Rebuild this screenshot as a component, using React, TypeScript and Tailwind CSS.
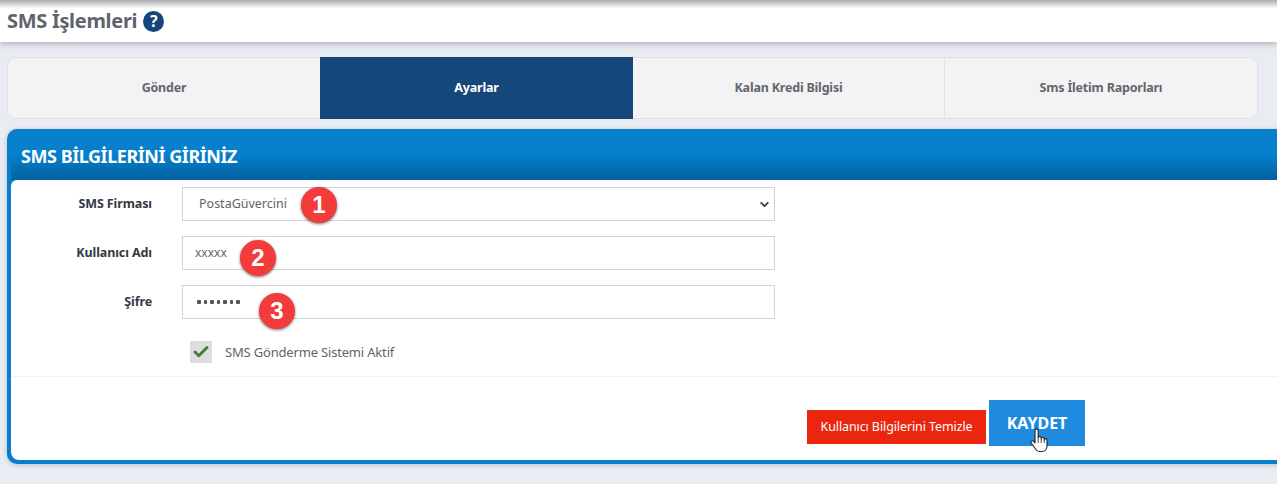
import { ChevronDown, Check } from 'lucide-react';

const tabs = [
  { label: 'Gönder', style: 'w-[313px] rounded-l-[8px] border-y border-l border-[#dfe1e4]', active: false },
  { label: 'Ayarlar', style: 'w-[313px] bg-[#16477a]', active: true },
  { label: 'Kalan Kredi Bilgisi', style: 'w-[312px] border-y border-r border-[#dfe1e4]', active: false },
  { label: 'Sms İletim Raporları', style: 'w-[313px] rounded-r-[8px] border-y border-r border-[#dfe1e4]', active: false },
];

function Badge({ n, className }: { n: number; className: string }) {
  return (
    <span
      className={`absolute flex h-9 w-9 items-center justify-center rounded-full bg-[#f33b3b] text-[24px] font-bold leading-none text-white shadow-[0_1px_3px_rgba(0,0,0,0.55)] font-['Liberation_Sans',sans-serif] ${className}`}
    >
      {n}
    </span>
  );
}

function Label({ children }: { children: string }) {
  return <label className="block w-[141px] text-right text-[12.5px] font-bold tracking-[-0.1px] text-[#333a42]">{children}</label>;
}

// hand cursor sitting on the save button
function HandCursor() {
  return (
    <svg viewBox="0 0 18 25" className="absolute left-[1019px] top-[248px] h-[25px] w-[18px]" fill="#fff" stroke="#222" strokeWidth="1.1" strokeLinejoin="round">
      <path d="M5 2.5a1.6 1.6 0 0 1 3.2 0V10a1.5 1.5 0 0 1 3 0v1a1.5 1.5 0 0 1 3 0v1a1.4 1.4 0 0 1 2.8 0v6c0 3-2 5.5-5 5.5H9.5c-2 0-3-1-4-2.5L1.2 15c-1-1.5.8-3 2.2-1.8L5 15Z" />
      <path d="M8.2 10v5M11.2 11v4M14.2 12v3" fill="none" strokeWidth="0.8" />
    </svg>
  );
}

export default function App() {
  return (
    <div className="h-[484px] w-[1277px] overflow-hidden bg-[#e9edf3] font-['Noto_Sans',sans-serif]">
      {/* page title */}
      <header className="flex h-[42px] items-center gap-[6px] bg-gradient-to-b from-[#a9abad] from-0% via-white via-[20%] to-white pl-[7px] shadow-[0_2px_6px_rgba(0,0,0,0.25)]">
        <h1 className="text-[20px] font-bold tracking-[-0.3px] text-[#5f636b]">SMS İşlemleri</h1>
        <span className="flex h-[21px] w-[21px] items-center justify-center rounded-full bg-[#16457a] text-[16px] font-bold leading-none text-white">?</span>
      </header>

      {/* tabs */}
      <nav className="ml-[7px] mt-[15px] flex h-[62px] w-[1251px]">
        {tabs.map((t) => (
          <div
            key={t.label}
            className={`flex items-center justify-center pt-[1px] text-[12.5px] font-bold tracking-[-0.2px] ${t.style} ${
              t.active ? 'text-white' : 'bg-[#f3f3f4] text-[#63676e]'
            }`}
          >
            {t.label}
          </div>
        ))}
      </nav>

      {/* form card */}
      <section className="-mr-[20px] ml-[7px] mt-[10px] h-[335px] rounded-[10px] border-b-4 border-l-4 border-[#0680cd] bg-[#0680cd] shadow-[0_1px_5px_rgba(0,0,0,0.2)]">
        <h2 className="flex h-[51px] items-center rounded-tl-[8px] bg-gradient-to-b from-[#0680cd] from-[50%] to-[#03629f] pl-[10px] pt-[4px] text-[18px] font-bold tracking-[-0.45px] text-white">
          SMS BİLGİLERİNİ GİRİNİZ
        </h2>
        <div className="relative h-[280px] rounded-bl-[8px] rounded-tl-[6px] bg-white">
          <div className="flex flex-col gap-[15px] pt-[7px]">
            <div className="flex items-center gap-[30px]">
              <Label>SMS Firması</Label>
              <div className="flex h-[34px] w-[593px] items-center justify-between border border-[#d0d4dc] pl-[16px] pr-[2px] text-[12.5px] text-[#61646b]">
                PostaGüvercini
                <ChevronDown size={13} strokeWidth={3.5} className="mr-[1px] text-[#444]" />
              </div>
            </div>
            <div className="flex items-center gap-[30px]">
              <Label>Kullanıcı Adı</Label>
              <div className="flex h-[34px] w-[593px] items-center border border-[#d0d4dc] pl-[12px] text-[12px] text-[#61646b]">xxxxx</div>
            </div>
            <div className="flex items-center gap-[30px]">
              <Label>Şifre</Label>
              <div className="flex h-[34px] w-[593px] items-center gap-[3px] border border-[#d0d4dc] pl-[14px]">
                {[0, 1, 2, 3, 4, 5, 6].map((i) => (
                  <span key={i} className="h-[3.5px] w-[3.5px] rounded-[1px] bg-[#50555b]" />
                ))}
              </div>
            </div>
          </div>

          <div className="ml-[179px] mt-[22px] flex items-center gap-[13px]">
            <span className="flex h-[22px] w-[22px] items-center justify-center bg-[#dedede]">
              <Check size={18} strokeWidth={4} className="text-[#4a7a3c]" />
            </span>
            <span className="pt-[1px] text-[13px] tracking-[-0.18px] text-[#61646b]">SMS Gönderme Sistemi Aktif</span>
          </div>

          <div className="mt-[13px] border-t border-[#f1f2f4]" />

          <div className="ml-[796px] mt-[23px] flex items-end gap-[3px]">
            <button className="mb-[2px] h-[34px] w-[179px] bg-[#ea260f] text-[12.5px] tracking-[-0.1px] text-white">Kullanıcı Bilgilerini Temizle</button>
            <button className="h-[46px] w-[96px] bg-[#1f8ae0] pb-[1px] text-[16px] font-bold text-white">KAYDET</button>
          </div>

          <Badge n={1} className="left-[290px] top-[7px]" />
          <Badge n={2} className="left-[229px] top-[60px]" />
          <Badge n={3} className="left-[248px] top-[113px]" />
          <HandCursor />
        </div>
      </section>
    </div>
  );
}
